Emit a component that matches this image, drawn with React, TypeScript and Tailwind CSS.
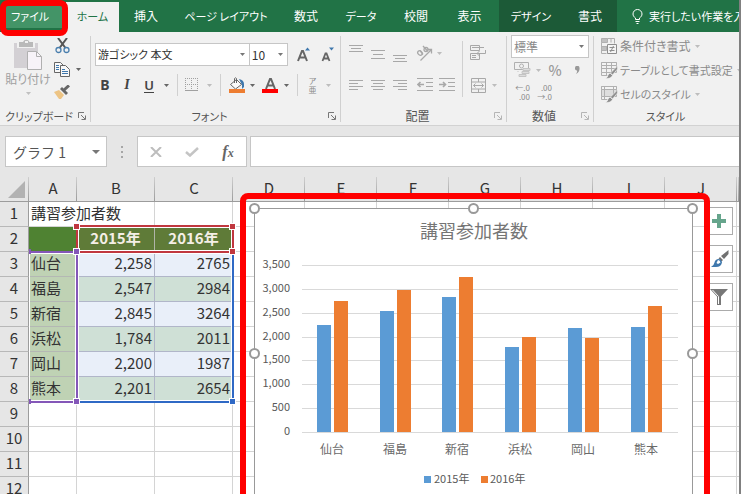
import React from "react";

const SANS = "font-['Noto_Sans_CJK_JP',sans-serif] [font-feature-settings:'palt']";

type Kids = { children?: React.ReactNode };

function Caret({ className = "fill-[#666666]" }: { className?: string }) {
  return (
    <svg width="5" height="3" viewBox="0 0 5 3" className={className} aria-hidden="true">
      <path d="M0 0h5L2.5 3z" />
    </svg>
  );
}

function CaretButton({ label, muted, className = "w-3" }: { label: string; muted?: boolean; className?: string }) {
  return (
    <button type="button" aria-label={label} className={`flex h-5 shrink-0 items-center justify-center ${className}`}>
      <Caret className={muted ? "fill-[#bdbdbd]" : "fill-[#666666]"} />
    </button>
  );
}

function Tool({ label, className = "w-[22px]", children }: { label: string; className?: string } & Kids) {
  return (
    <button type="button" aria-label={label} className={`flex h-5 shrink-0 items-center justify-center ${className}`}>
      {children}
    </button>
  );
}

function Divider({ className = "mx-[5px] h-[22px]" }: { className?: string }) {
  return <span className={`w-px shrink-0 bg-[#d0d0d0] ${className}`} />;
}

function Group({
  title,
  titleSize = "text-[11px]",
  launcher,
  className,
  children,
}: { title: string; titleSize?: string; launcher?: "dark" | "light"; className: string } & Kids) {
  return (
    <section aria-label={title} className={`relative flex flex-col ${className}`}>
      <div className="h-[76px]">{children}</div>
      <div className="flex h-4 items-center">
        <span className={`flex-1 text-center leading-4 whitespace-nowrap text-[#555555] ${titleSize}`}>{title}</span>
        {launcher && (
          <button type="button" aria-label={`${title}の設定`} className="mr-1 flex w-2 shrink-0 items-center">
            <svg width="8" height="8" viewBox="0 0 8 8" fill="none" className={launcher === "dark" ? "stroke-[#777777]" : "stroke-[#b5b5b5]"}>
              <path d="M.5 6V.5H6M3 3l4 4M7.5 3.500V7.500H3.500" />
            </svg>
          </button>
        )}
      </div>
    </section>
  );
}

function Select({ label, value, className, text }: { label: string; value: string; className: string; text: string }) {
  return (
    <span className={`relative flex border border-[#c6c6c6] bg-white ${className}`}>
      <select aria-label={label} defaultValue={value} className={`w-full appearance-none bg-transparent pl-[2px] outline-none ${text}`}>
        <option>{value}</option>
      </select>
      <span className="pointer-events-none absolute inset-y-0 right-[4px] flex items-center">
        <Caret className="fill-[#777777]" />
      </span>
    </span>
  );
}

function Lines({ widths, offset = 0, gap = 3 }: { widths: number[][]; offset?: number; gap?: number }) {
  return (
    <svg width="14" height="18" viewBox="0 0 14 18" className="fill-[#a8a8a8]" aria-hidden="true">
      {widths.map(([x, w], i) => (
        <rect key={i} x={x} y={offset + i * (gap + 1)} width={w} height="1" />
      ))}
    </svg>
  );
}

function Indent({ right }: { right?: boolean }) {
  return (
    <svg width="16" height="14" viewBox="0 0 16 14" fill="none" stroke="#a8a8a8">
      <path d="M0 .5h16M9 4.500h7M9 8.500h7M0 12.500h16" />
      <path strokeWidth="1.600" d={right ? "M0 6.500h6M4 4l2.500 2.500L4 9" : "M7 6.500H1M3.500 4L1 6.500 3.500 9"} />
    </svg>
  );
}

const tabs: [string, string][] = [
  ["挿入", "w-[54px] text-xs"],
  ["ページ レイアウト", "w-[106px] text-[11px]"],
  ["数式", "w-[54px] text-xs"],
  ["データ", "w-[56px] text-[11px]"],
  ["校閲", "w-[54px] text-xs"],
  ["表示", "w-[53px] text-xs"],
];

function TabBar() {
  return (
    <nav className="relative flex h-8 shrink-0 items-stretch overflow-hidden bg-[#217346] text-[11px] whitespace-nowrap text-white">
      <button type="button" className="my-1 ml-1 flex w-[58px] shrink-0 items-center justify-center bg-[#439467] pr-[6px]">
        ファイル
      </button>
      <button type="button" className="mt-[2px] ml-1 w-[53px] shrink-0 bg-[#f1f1f1] pb-[2px] text-[#217346]">
        ホーム
      </button>
      {tabs.map(([name, look]) => (
        <button type="button" key={name} className={`shrink-0 ${look}`}>
          {name}
        </button>
      ))}
      <div className="ml-[3px] flex shrink-0 bg-[#1c5a37]">
        <button type="button" className="w-16">デザイン</button>
        <button type="button" className="w-[54px] text-xs">書式</button>
      </div>
      <button type="button" className="ml-[15px] flex shrink-0 items-center gap-[6px]">
        <svg width="11" height="15" viewBox="0 0 11 15" fill="none" stroke="#ffffff" aria-hidden="true">
          <path d="M3.500 10.500V9C2 8 1 6.700 1 5a4.500 4.500 0 0 1 9 0c0 1.700-1 3-2.500 4v1.500zM3.500 12.500h4M4.500 14.500h2" />
        </svg>
        実行したい作業を入
      </button>
    </nav>
  );
}

function ClipboardGroup() {
  return (
    <Group title="クリップボード" launcher="dark" className="w-[90px] shrink-0">
      <div className="flex">
        <button type="button" className="ml-[6px] flex w-[44px] flex-col items-center pt-[7px] text-xs leading-4 whitespace-nowrap text-[#a0a0a0]">
          <svg width="30" height="32" viewBox="0 0 30 32" aria-hidden="true">
            <path fill="#d3d0d4" d="M1 4h24v25H1z" />
            <path fill="#f1f1f1" d="M4 4h18v5H4z" />
            <path fill="#b9b9b9" d="M6 3h4a3.500 3.500 0 0 1 6.500 0H20v5H6z" />
            <path fill="#f1f1f1" d="M12 2h3v2h-3z" />
            <path fill="#f7f3f8" stroke="#b0b0b0" d="M14.500 12.500h9l5 5v13h-14z" />
            <path fill="none" stroke="#b0b0b0" d="M23.500 12.500v5h5" />
          </svg>
          貼り付け
          <span className="flex h-3 items-center"><Caret className="fill-[#c0c0c0]" /></span>
        </button>
        <div className="ml-1 flex flex-col gap-[3px] pt-1">
          <Tool label="切り取り" className="w-4">
            <svg width="15" height="16" viewBox="0 0 15 16" fill="none">
              <path stroke="#555555" strokeWidth="2" d="M3 0l7.500 10M12 0L4.500 10" />
              <circle cx="3.500" cy="12" r="2.500" stroke="#4a7fae" strokeWidth="1.300" />
              <circle cx="11.500" cy="12" r="2.500" stroke="#4a7fae" strokeWidth="1.300" />
            </svg>
          </Tool>
          <div className="flex">
            <Tool label="コピー" className="w-4">
              <svg width="16" height="15" viewBox="0 0 16 15" fill="#f8f8f8" stroke="#666666">
                <path d="M.5.5h6l3 3v7h-9z" />
                <path d="M6.500 3.500h5l4 4v7h-9z" />
                <path stroke="#3f78ad" d="M2 3.500h3M2 5.500h3M2 7.500h3M8 7.500h3M8 9.500h6M8 11.500h6" />
              </svg>
            </Tool>
            <CaretButton label="コピーのオプション" className="w-[15px] pl-[2px]" />
          </div>
          <Tool label="書式のコピー" className="w-4">
            <svg width="16" height="14" viewBox="0 0 16 14">
              <path fill="#edc484" d="M0 7l5-2 5 5-3 4H5z" />
              <path fill="#666666" d="M6 4l2-2 6 6-2 2z" />
              <path stroke="#666666" strokeWidth="3" d="M10 5l5-4.500" />
            </svg>
          </Tool>
        </div>
      </div>
    </Group>
  );
}

function FontGroup() {
  return (
    <Group title="フォント" launcher="dark" className="w-[249px] shrink-0">
      <div className="flex pt-[11px] pl-1">
        <Select label="フォント名" value="游ゴシック 本文" text="text-[11px] text-[#333333]" className="h-[23px] w-[158px]" />
        <Select label="フォント サイズ" value="10" text="text-xs text-[#333333]" className="-ml-px h-[23px] w-10" />
        <Tool label="フォント サイズの拡大" className="ml-1 h-[23px] w-6">
          <svg width="14" height="16" viewBox="0 0 14 16" fill="none">
            <path stroke="#666666" strokeWidth="2" d="M1 14l4-10h1l4 10M2.500 10.500h6" />
            <path fill="#3f78ad" d="M8 3.500h5L10.500.5z" />
          </svg>
        </Tool>
        <Tool label="フォント サイズの縮小" className="h-[23px] w-6">
          <svg width="14" height="16" viewBox="0 0 14 16" fill="none">
            <path stroke="#666666" strokeWidth="1.800" d="M1.500 14L4.500 6.500h1l3 7.500M3 11.500h5" />
            <path fill="#3f78ad" d="M8 .5h5L10.500 3.500z" />
          </svg>
        </Tool>
      </div>
      <div className="mt-[7px] flex h-6 items-center pl-[3px] text-sm text-[#444444]">
        <Tool label="太字"><b className="font-['Noto_Sans',sans-serif]">B</b></Tool>
        <Tool label="斜体"><b className="font-['Liberation_Serif',serif] italic">I</b></Tool>
        <Tool label="下線"><span className="border-b border-[#444444] font-['Noto_Sans',sans-serif] text-[13px] leading-[14px] font-semibold">U</span></Tool>
        <CaretButton label="下線の種類" />
        <Divider />
        <Tool label="罫線" className="w-[18px]">
          <svg width="14" height="14" viewBox="0 0 14 14" stroke="#a0a0a0" fill="none">
            <path strokeDasharray="1 1" d="M0 .5h13M.5 0v13M6.500 0v13M12.500 0v13M0 6.500h13" />
            <path d="M0 12.500h13" />
          </svg>
        </Tool>
        <CaretButton label="罫線の種類" muted className="ml-[2px] w-3" />
        <Divider />
        <Tool label="塗りつぶしの色" className="w-5">
          <svg width="17" height="16" viewBox="0 0 17 16">
            <path fill="#fafafa" stroke="#666666" d="M2.500 7.500l6-5 5 5-6 4.500zM6.500 6V1.500q1.500-1.500 2 0V6" />
            <path fill="#3f78ad" d="M11 2q5 1 5 5v3l-2 2V8z" />
            <path fill="#ed7d31" d="M1 12h16v4H1z" />
          </svg>
        </Tool>
        <CaretButton label="塗りつぶしの色の選択" />
        <Tool label="フォントの色" className="ml-[2px] w-5">
          <svg width="16" height="16" viewBox="0 0 16 16" fill="none">
            <path stroke="#666666" strokeWidth="2" d="M4 12L8 2h1l4 10M5.500 8.500h6" />
            <path fill="#ff0000" d="M0 12h16v4H0z" />
          </svg>
        </Tool>
        <CaretButton label="フォントの色の選択" />
        <Divider />
        <Tool label="ふりがな" className="w-[19px]">
          <span className="flex flex-col items-center text-[8px] leading-[9px] text-[#8a8a8a]"><span>ア</span><span>亜</span></span>
        </Tool>
        <CaretButton label="ふりがなのオプション" muted />
      </div>
    </Group>
  );
}

function AlignGroup() {
  const full = [[0, 14], [2, 10], [0, 14]];
  return (
    <Group title="配置" titleSize="text-xs" launcher="light" className="w-[165px] shrink-0">
      <div className="flex pt-[9px]">
        <div className="flex flex-col gap-2 pl-1">
          <div className="flex h-6 items-center">
            <Tool label="上揃え"><Lines widths={full} offset={1} gap={2} /></Tool>
            <Tool label="上下中央揃え"><Lines widths={full} offset={6} /></Tool>
            <Tool label="下揃え"><Lines widths={full} offset={11} gap={2} /></Tool>
            <Tool label="方向" className="ml-1 w-5">
              <svg width="18" height="16" viewBox="0 0 18 16" fill="none" stroke="#a8a8a8" strokeWidth="1.300">
                <path d="M4.500 15.500L15 5M11.500 4.500H15.500V8.500" />
                <ellipse cx="4" cy="8" rx="2" ry="2.500" transform="rotate(-45 4 8)" />
                <path d="M4 5.500l3 4M7 1l4.500 5" />
                <circle cx="10" cy="4.500" r="2" />
              </svg>
            </Tool>
            <CaretButton label="方向のオプション" muted className="w-2" />
          </div>
          <div className="flex h-6 items-center">
            <Tool label="左揃え"><Lines widths={[[0, 14], [0, 9], [0, 14], [0, 9]]} gap={2} offset={4} /></Tool>
            <Tool label="中央揃え"><Lines widths={[[0, 14], [2, 10], [0, 14], [2, 10]]} gap={2} offset={4} /></Tool>
            <Tool label="右揃え"><Lines widths={[[0, 14], [5, 9], [0, 14], [5, 9]]} gap={2} offset={4} /></Tool>
            <Tool label="インデントを減らす" className="ml-[3px] w-[22px]"><Indent /></Tool>
            <Tool label="インデントを増やす"><Indent right /></Tool>
          </div>
        </div>
        <Divider className="ml-1 h-14" />
        <div className="flex flex-col gap-2 pl-[5px]">
          <Tool label="折り返して全体を表示する" className="h-6 w-5">
            <svg width="16" height="16" viewBox="0 0 16 16" fill="none" stroke="#a8a8a8">
              <path d="M.5.5h9v5h-9zM.5 8.500h9v6h-9zM2 2.500h12M2 10.500h4M2 12.500h4M15.500 5v3.500H7M9.500 6L7 8.500 9.500 11" />
            </svg>
          </Tool>
          <div className="flex h-6 items-center">
            <Tool label="セルを結合して中央揃え" className="w-5">
              <svg width="15" height="15" viewBox="0 0 15 15" fill="none" stroke="#a8a8a8">
                <path d="M.5.5h14v14H.5zM.5 4h14M.5 11h14M7.500 0v4M7.500 11v4M2.500 7.500h10M4.500 5.500l-2 2 2 2M10.500 5.500l2 2-2 2" />
              </svg>
            </Tool>
            <CaretButton label="結合のオプション" muted />
          </div>
        </div>
      </div>
    </Group>
  );
}

function DecimalIcon({ up }: { up?: boolean }) {
  return (
    <span className="flex w-4 flex-col text-[8px] leading-[9px] text-[#8a8a8a]">
      <span className="text-right">{up ? "←.0" : ".00"}</span>
      <span className="text-right">{up ? ".00" : "→.0"}</span>
    </span>
  );
}

function NumberGroup() {
  return (
    <Group title="数値" titleSize="text-xs" launcher="light" className="w-[86px] shrink-0">
      <div className="flex pt-[3px] pl-1">
        <Select label="表示形式" value="標準" text="text-xs text-[#8a8a8a]" className="h-[23px] w-[78px]" />
      </div>
      <div className="flex h-6 items-center pl-[5px] text-[#999999]">
        <Tool label="通貨表示形式" className="w-5">
          <svg width="17" height="16" viewBox="0 0 17 16" fill="none" stroke="#b0b0b0">
            <path d="M.5.5h14v7H.5z" />
            <circle cx="7.500" cy="4" r="2" />
            <path fill="#dcdcdc" stroke="#c4c4c4" d="M9 6.500h7v2H9zM8 9.500h7v2H8zM4.500 9.500h-1M5 12.500h7v2H5z" />
          </svg>
        </Tool>
        <CaretButton label="通貨の種類" muted />
        <Tool label="パーセント" className="w-[22px] text-sm font-medium">%</Tool>
        <Tool label="桁区切り" className="w-[22px]">
          <svg width="5" height="8" viewBox="0 0 5 8" fill="#999999"><path d="M0 2a2 2 0 1 1 4.500 0Q5 6 1 8q1.500-2 1-3.500A2 2 0 0 1 0 2z" /></svg>
        </Tool>
      </div>
      <div className="flex h-5 items-center pl-1">
        <Tool label="小数点以下の表示桁数を増やす"><DecimalIcon up /></Tool>
        <Tool label="小数点以下の表示桁数を減らす"><DecimalIcon /></Tool>
      </div>
    </Group>
  );
}

function StyleIcon({ kind }: { kind: number }) {
  return (
    <svg width="17" height="17" viewBox="0 0 17 17" fill="none" stroke="#b0b0b0" className="shrink-0" aria-hidden="true">
      {kind === 0 ? (
        <>
          <path fill="#c0c0c0" d="M.5.5h6v4h-6zM.5 8.500h5v4h-5z" />
          <path d="M6.500.5h7v5M.5 4.500v11h5M.5 8.500h6M10 .5v4" />
          <path stroke="#8f8f8f" fill="#f5f5f5" d="M6.500 6.500h9v9h-9z" />
          <path stroke="#8f8f8f" d="M8.500 9.500h5M8.500 12.500h5M12.500 8l-3 6" />
        </>
      ) : (
        <>
          <path fill={kind === 2 ? "#dddddd" : "none"} d="M.5.5h15v10H.5z" />
          <path fill="#f4f4f4" d="M.5.5h15v3H.5z" />
          <path d={kind === 2 ? "M3.500.5v13M12.500.5v10M.5 10.500v3h6" : "M.5 6.500h15M5.500.5v13M10.500.5v10M.5 10.500v3h6"} />
          <path fill="#8f8f8f" stroke="#f1f1f1" strokeWidth=".6" d="M16.500 4v3l-5 6-2-2zM9 11l2.500 2.500Q10 17 4 16.500q3-1 3-3.500z" />
        </>
      )}
    </svg>
  );
}

const styleCommands: [string, string][] = [
  ["条件付き書式", "text-xs"],
  ["テーブルとして書式設定", "text-[11px]"],
  ["セルのスタイル", "text-[11px]"],
];

function StyleGroup() {
  return (
    <Group title="スタイル" className="min-w-0 flex-1 pr-[2px]">
      <div className="flex flex-col pt-[2px] pl-[7px] whitespace-nowrap text-[#8a8a8a]">
        {styleCommands.map(([name, size], i) => (
          <button type="button" key={name} className={`flex h-6 items-center gap-[2px] ${size}`}>
            <StyleIcon kind={i} />
            {name}
            <Caret className="ml-[2px] shrink-0 fill-[#bdbdbd]" />
          </button>
        ))}
      </div>
    </Group>
  );
}

function Ribbon() {
  const rule = "my-1 h-[86px]";
  return (
    <div className="flex h-[94px] shrink-0 overflow-hidden border-b border-[#d2d2d2] bg-[#f1f1f1]">
      <ClipboardGroup />
      <Divider className={rule} />
      <FontGroup />
      <Divider className={rule} />
      <AlignGroup />
      <Divider className={rule} />
      <NumberGroup />
      <Divider className={rule} />
      <StyleGroup />
    </div>
  );
}

function FormulaBar() {
  return (
    <div className="flex h-[51px] shrink-0 items-start bg-[#e6e6e6] pt-[10px] pl-[5px]">
      <div className="flex h-[31px] w-[102px] shrink-0 items-center border border-[#c6c6c6] bg-white">
        <input aria-label="名前ボックス" defaultValue="グラフ 1" className="w-20 bg-transparent pl-[7px] text-sm text-[#555555] outline-none [font-feature-settings:normal]" />
        <button type="button" aria-label="名前の一覧" className="flex h-full flex-1 items-center justify-center">
          <svg width="8" height="4" viewBox="0 0 8 4" className="fill-[#777777]"><path d="M0 0h8L4 4z" /></svg>
        </button>
      </div>
      <div className="flex h-[31px] w-[30px] shrink-0 flex-col items-center justify-center gap-[3px]">
        <span className="size-[2px] bg-[#a6a6a6]" />
        <span className="size-[2px] bg-[#a6a6a6]" />
        <span className="size-[2px] bg-[#a6a6a6]" />
      </div>
      <div className="flex h-[31px] w-[110px] shrink-0 items-center border border-[#c6c6c6] bg-white">
        <Tool label="キャンセル" className="w-9">
          <svg width="12" height="10" viewBox="0 0 12 10" stroke="#bdbdbd" strokeWidth="2"><path d="M1 0l10 10M11 0L1 10" /></svg>
        </Tool>
        <Tool label="入力" className="w-9">
          <svg width="14" height="10" viewBox="0 0 14 10" fill="none" stroke="#c4c4c4" strokeWidth="2.500"><path d="M1 5l4 3.500L13 1" /></svg>
        </Tool>
        <Tool label="関数の挿入" className="w-9">
          <span className="font-['Liberation_Serif',serif] text-base font-bold text-[#666666] italic">f<span className="text-xs">x</span></span>
        </Tool>
      </div>
      <input aria-label="数式バー" className="ml-[3px] h-[31px] min-w-0 flex-1 border border-r-0 border-[#c6c6c6] bg-white px-2 text-sm outline-none" />
    </div>
  );
}

const columns = ["A", "B", "C", "D", "E", "F", "G", "H", "I", "J"];
const cities: [string, number, number][] = [
  ["仙台", 2258, 2765],
  ["福島", 2547, 2984],
  ["新宿", 2845, 3264],
  ["浜松", 1784, 2011],
  ["岡山", 2200, 1987],
  ["熊本", 2201, 2654],
];

function dataCells(row: number) {
  const plain = "border-r border-b border-[#d4d4d4]";
  if (row === 1) {
    return [
      <td key="A" colSpan={2} className={`${plain} pb-[2px] pl-[2px] text-left`}>講習参加者数</td>,
      <td key="C" className={plain} />,
    ];
  }
  if (row === 2) {
    const head = "border-r border-b border-[#b0b4a8] bg-[#5f7b38] pb-[2px] text-center font-bold text-[#f5efe6]";
    return [
      <td key="A" className="border-r border-b border-[#b0b4a8] bg-[#4f8232]" />,
      <td key="B" className={head}>2015年</td>,
      <td key="C" className={head}>2016年</td>,
    ];
  }
  const city = cities[row - 3];
  if (!city) return columns.slice(0, 3).map((c) => <td key={c} className={plain} />);
  const tint = row % 2 ? "bg-[#e9eff9]" : "bg-[#cfe0d6]";
  const num = `border-r border-b border-[#b1b6c9] pr-[2px] pb-[2px] text-right ${tint}`;
  return [
    <td key="A" className="border-r border-b border-[#b4b8b4] bg-[#bfd2b4] pb-[2px] pl-[2px] text-left">{city[0]}</td>,
    <td key="B" className={num}>{city[1].toLocaleString("en-US")}</td>,
    <td key="C" className={num}>{city[2]}</td>,
  ];
}

function Grid() {
  const header =
    "border-b border-[#9c9c9c] bg-[linear-gradient(to_bottom,#cfcfcf,#9c9c9c)] bg-[length:1px_100%] bg-right bg-no-repeat p-0 font-normal";
  return (
    <table className="w-full table-fixed border-separate border-spacing-0 bg-white text-[15px] leading-[22px] whitespace-nowrap text-[#333333]">
      <colgroup>
        <col className="w-[29px]" />
        <col className="w-12" />
        <col className="w-[78px]" />
        <col className="w-[78px]" />
        {columns.slice(3).map((c) => (
          <col key={c} className="w-[72px]" />
        ))}
        <col />
      </colgroup>
      <thead className="bg-[#e6e6e6]">
        <tr className="h-[25px]">
          <th className={header}>
            <svg width="17" height="17" viewBox="0 0 17 17" className="ml-2 fill-[#b2b2b2]" aria-hidden="true"><path d="M17 0v17H0z" /></svg>
          </th>
          {columns.map((c) => (
            <th key={c} scope="col" className={header}>
              <span className="block pb-[2px]">{c}</span>
            </th>
          ))}
          <th className={header} />
        </tr>
      </thead>
      <tbody>
        {Array.from({ length: 12 }, (_, i) => i + 1).map((row) => (
          <tr key={row} className="h-[25px]">
            <th scope="row" className="border-r border-b border-r-[#9c9c9c] border-b-[#b8b8b8] bg-[#e6e6e6] px-0 pt-0 pb-[2px] text-center font-normal">{row}</th>
            {dataCells(row)}
            {columns.slice(3).map((c) => (
              <td key={c} className="border-r border-b border-[#d4d4d4]" />
            ))}
            <td className="border-b border-[#d4d4d4]" />
          </tr>
        ))}
      </tbody>
    </table>
  );
}

/* Coloured outlines that mark the series names, categories and values of the chart. */
function RangeMarks() {
  const box = "absolute shadow-[inset_0_0_0_1px_#ffffff]";
  const knob = "absolute size-[7px] border border-white";
  return (
    <>
      <div className={`${box} top-[74px] left-[76px] h-[152px] w-[158px] border-2 border-[#2f69c5]`} />
      <div className={`${box} top-[74px] left-[29px] h-[152px] w-[49px] border-y-2 border-r-2 border-[#8457b8]`} />
      <div className={`${box} top-[48px] left-[76px] h-[28px] w-[158px] border-2 border-[#c0373f]`} />
      <div className={`${knob} top-[46px] left-[73px] bg-[#c0373f]`} />
      <div className={`${knob} top-[46px] left-[229px] bg-[#c0373f]`} />
      <div className={`${knob} top-[71px] left-[229px] bg-[#c0373f]`} />
      <div className={`${knob} top-[71px] left-[73px] bg-[#8457b8]`} />
      <div className={`${knob} top-[221px] left-[73px] bg-[#8457b8]`} />
      <div className={`${knob} top-[221px] left-[229px] bg-[#2f69c5]`} />
      <div className="absolute top-[72px] left-[29px] h-[5px] w-[2px] bg-[#8457b8]" />
      <div className="absolute top-[222px] left-[29px] h-[5px] w-[2px] bg-[#8457b8]" />
    </>
  );
}

function Handle({ className }: { className: string }) {
  return <span className={`absolute size-[11px] rounded-full border-2 border-[#999999] bg-white ${className}`} />;
}

function BarChart() {
  const base = 224;
  const step = 167 / 7;
  const height = (v: number) => Math.floor((v / 3500) * 167);
  return (
    <svg width="437" height="292" viewBox="0 0 437 292" role="img" aria-label="講習参加者数のグラフ" className="block">
      <text x="219" y="29" textAnchor="middle" fontSize="18" fill="#757575">講習参加者数</text>
      {Array.from({ length: 8 }, (_, i) => {
        const y = base - Math.round(i * step);
        return (
          <g key={i}>
            <rect x="47" y={y - 1} width="376" height="1" fill="#d9d9d9" />
            <text x="35" y={y + 2} textAnchor="end" fontSize="11" fill="#595959">{(i * 500).toLocaleString("en-US")}</text>
          </g>
        );
      })}
      {cities.map(([name, a, b], i) => {
        const left = 62 + Math.round(i * 62.7);
        return (
          <g key={name}>
            <rect x={left} y={base - 1 - height(a)} width="14" height={height(a)} fill="#5b9bd5" />
            <rect x={left + 17} y={base - 1 - height(b)} width="14" height={height(b)} fill="#ed7d31" />
            <text x={left + 15} y="245" textAnchor="middle" fontSize="12" fill="#6a6a6a">{name}</text>
          </g>
        );
      })}
      <rect x="169" y="267" width="7" height="7" fill="#5b9bd5" />
      <text x="179" y="274" fontSize="11" fill="#595959">2015年</text>
      <rect x="226" y="267" width="7" height="7" fill="#ed7d31" />
      <text x="235" y="274" fontSize="11" fill="#595959">2016年</text>
    </svg>
  );
}

function SideButton({ label, children }: { label: string } & Kids) {
  return (
    <button type="button" aria-label={label} className="flex size-7 items-center justify-center border border-[#ababab] bg-white">
      {children}
    </button>
  );
}

function ChartObject() {
  return (
    <>
      <div className="absolute top-[31px] left-[254px] h-[300px] w-[439px] border border-[#999999] bg-white">
        <BarChart />
        <Handle className="-top-[6px] -left-[6px]" />
        <Handle className="-top-[6px] left-[213px]" />
        <Handle className="-top-[6px] -right-[6px]" />
        <Handle className="top-[139px] -left-[6px]" />
        <Handle className="top-[139px] -right-[6px]" />
      </div>
      <div className="absolute top-[30px] left-[705px] flex flex-col gap-[10px]">
        <SideButton label="グラフ要素">
          <svg width="14" height="14" viewBox="0 0 14 14" fill="#66a58c"><path d="M5 0h4v5h5v4H9v5H5V9H0V5h5z" /></svg>
        </SideButton>
        <SideButton label="グラフ スタイル">
          <svg width="19" height="18" viewBox="0 0 19 18">
            <path fill="#707070" d="M18.500 0v4l-4.500 5-3-3zM10 7l3 3-1.500 1.500-3-3z" />
            <path fill="#3f78ad" d="M8 9q3.500 0 4 3.500Q11 17 6 17H1q3-1.500 3.500-4.500T8 9z" />
            <path fill="#ffffff" d="M8 10q2 0 2.500 2.500L8 14l-1.500-1z" />
          </svg>
        </SideButton>
        <SideButton label="グラフ フィルター">
          <svg width="20" height="18" viewBox="0 0 20 18">
            <path fill="#777777" d="M1 1h18l-7 7.500V17H8V8.500z" />
            <path fill="none" stroke="#ffffff" d="M3.500 2l6 6.500V16" />
          </svg>
        </SideButton>
      </div>
      <div className="absolute top-[16px] left-[240px] h-[330px] w-[470px] rounded-lg border-6 border-[#ff0000]" />
    </>
  );
}

export default function App() {
  return (
    <div className={`relative flex h-screen w-full flex-col overflow-hidden border-r-2 border-[#808080] bg-[#e6e6e6] ${SANS}`}>
      <TabBar />
      <Ribbon />
      <FormulaBar />
      <main className="relative min-h-0 flex-1 overflow-hidden">
        <Grid />
        <RangeMarks />
        <ChartObject />
      </main>
      <div className="pointer-events-none absolute top-0 left-0 h-9 w-[68px] rounded-lg border-6 border-[#ff0000]" />
    </div>
  );
}
